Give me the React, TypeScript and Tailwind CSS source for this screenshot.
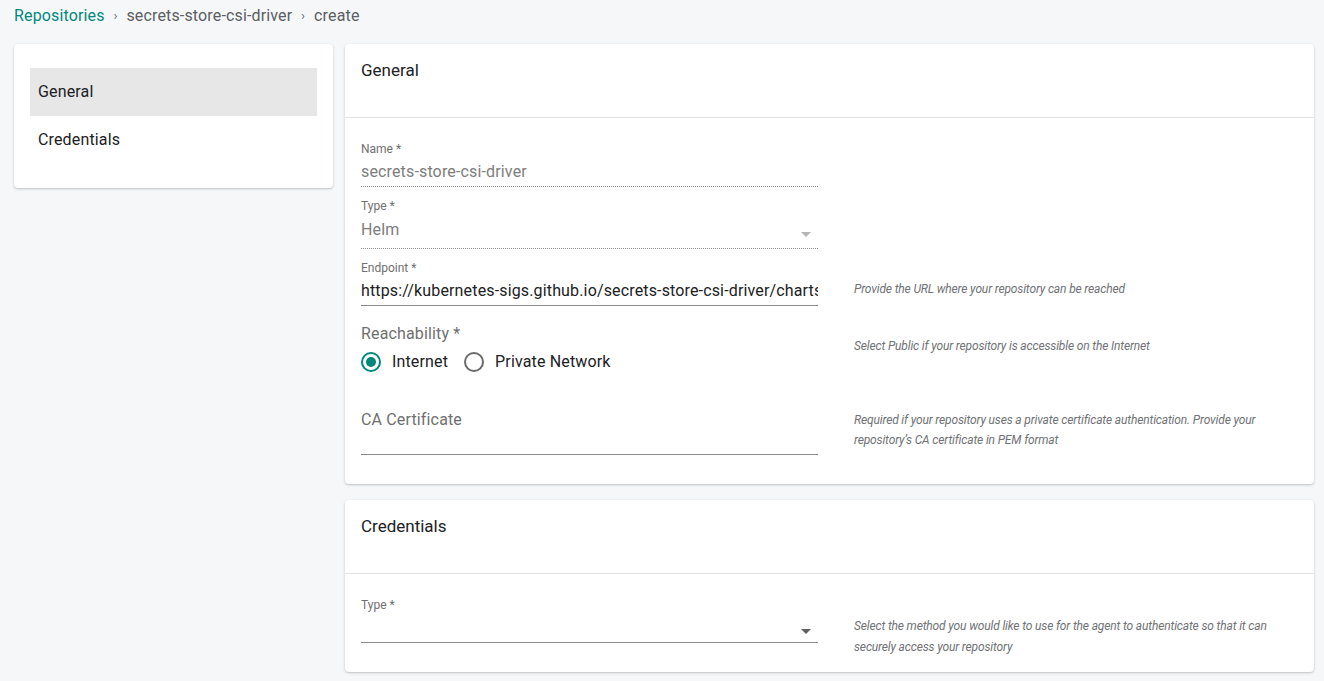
import React from 'react';

const FIELD_W = 'w-[457px]';

function Arrow({ disabled }: { disabled?: boolean }) {
  return (
    <svg viewBox="0 0 24 24" className={`h-6 w-6 ${disabled ? 'fill-[#b5b5b5]' : 'fill-[#5f5f5f]'}`}>
      <path d="M7 10l5 5 5-5z" />
    </svg>
  );
}

function Radio({ checked, label }: { checked?: boolean; label: string }) {
  return (
    <label className="flex items-center gap-[11px]">
      <span
        className={`flex h-5 w-5 items-center justify-center rounded-full border-2 ${
          checked ? 'border-[#00897b]' : 'border-[#6b6b6b]'
        }`}
      >
        {checked && <span className="h-[10px] w-[10px] rounded-full bg-[#00897b]" />}
      </span>
      <span className="text-base tracking-[0.15px] text-[#202124]">{label}</span>
    </label>
  );
}

function Help({ children, className = '' }: { children: React.ReactNode; className?: string }) {
  return (
    <p
      className={`max-w-[430px] text-xs italic leading-[20px] tracking-[-0.15px] text-[#6f7276] ${className}`}
    >
      {children}
    </p>
  );
}

function Row({ children, help }: { children: React.ReactNode; help?: React.ReactNode }) {
  return (
    <div className="flex gap-9">
      <div className={FIELD_W}>{children}</div>
      {help}
    </div>
  );
}

function SmallLabel({ children }: { children: React.ReactNode }) {
  return <div className="h-[14px] text-xs leading-[14px] text-[#6f6f6f]">{children}</div>;
}

const cardShadow = 'shadow-[0_1px_3px_rgba(0,0,0,0.18),0_1px_1px_rgba(0,0,0,0.06)]';

export default function App() {
  return (
    <div
      className="min-h-[681px] bg-[#f6f7f9] pl-[14px] pr-[10px]"
      style={{ fontFamily: 'Roboto, "Noto Sans", sans-serif' }}
    >
      {/* breadcrumb */}
      <nav className="flex h-8 items-center gap-[9px] text-base leading-5 tracking-[0.15px] text-[#5b5e63]">
        <span className="text-[#00897b]">Repositories</span>
        <span className="text-xs">›</span>
        <span>secrets-store-csi-driver</span>
        <span className="text-xs">›</span>
        <span>create</span>
      </nav>

      <div className="mt-3 flex items-start gap-3">
        {/* side nav */}
        <aside className={`w-[319px] rounded bg-white px-4 pb-6 pt-6 ${cardShadow}`}>
          <div className="flex h-12 items-center bg-[#e7e7e7] px-2 text-base tracking-[0.15px] text-[#202124]">
            General
          </div>
          <div className="flex h-12 items-center px-2 text-base tracking-[0.15px] text-[#202124]">
            Credentials
          </div>
        </aside>

        <div className="flex flex-1 flex-col gap-4">
          {/* General card */}
          <section className={`rounded bg-white ${cardShadow}`}>
            <header className="flex h-[74px] items-start border-b border-[#e3e3e3] px-4 pt-[16px] text-[17px] leading-5 text-[#202124]">
              General
            </header>
            <div className="px-4 pb-[29px] pt-[24px]">
              <Row>
                <SmallLabel>Name *</SmallLabel>
                <div className="border-b border-dotted border-[#8c8c8c] pb-[3px] pt-1 text-base leading-[23px] tracking-[0.15px] text-[#7d7d7d]">
                  secrets-store-csi-driver
                </div>
              </Row>

              <div className="mt-[12px]">
                <Row>
                  <SmallLabel>Type *</SmallLabel>
                  <div className="flex items-center justify-between border-b border-dotted border-[#8c8c8c] pb-[7px] pt-[5px] text-base leading-[23px] tracking-[0.15px] text-[#7d7d7d]">
                    <span>Helm</span>
                    <span className="-mb-2">
                      <Arrow disabled />
                    </span>
                  </div>
                </Row>
              </div>

              <div className="mt-[12px]">
                <Row help={<Help className="pt-[18px]">Provide the URL where your repository can be reached</Help>}>
                  <SmallLabel>Endpoint *</SmallLabel>
                  <div className="overflow-hidden whitespace-nowrap border-b border-[#8a8a8a] pb-[3px] pt-1 text-base leading-[23px] tracking-[0.15px] text-[#202124]">
                    https://kubernetes-sigs.github.io/secrets-store-csi-driver/charts
                  </div>
                </Row>
              </div>

              <div className="mt-[18px]">
                <Row help={<Help className="pt-[12px]">Select Public if your repository is accessible on the Internet</Help>}>
                  <div className="text-base leading-[19px] tracking-[0.15px] text-[#6f6f6f]">Reachability *</div>
                  <div className="flex h-[38px] items-center gap-4">
                    <Radio checked label="Internet" />
                    <Radio label="Private Network" />
                  </div>
                </Row>
              </div>

              <div className="pt-[16px]">
                <Row
                  help={
                    <Help className="pt-[13px]">
                      Required if your repository uses a private certificate authentication. Provide your
                      repository’s CA certificate in PEM format
                    </Help>
                  }
                >
                  <div className="border-b border-[#8a8a8a] pb-[25px] pt-[13px] text-base leading-[19px] tracking-[0.15px] text-[#6f6f6f]">
                    CA Certificate
                  </div>
                </Row>
              </div>
            </div>
          </section>

          {/* Credentials card */}
          <section className={`rounded bg-white ${cardShadow}`}>
            <header className="flex h-[74px] items-start border-b border-[#e3e3e3] px-4 pt-[16px] text-[17px] leading-5 text-[#202124]">
              Credentials
            </header>
            <div className="px-4 pb-[14px] pt-[24px]">
              <Row
                help={
                  <Help className="pt-[18px] leading-[21px]">
                    Select the method you would like to use for the agent to authenticate so that it can
                    securely access your repository
                  </Help>
                }
              >
                <SmallLabel>Type *</SmallLabel>
                <div className="flex h-[31px] items-end justify-end border-b border-[#8a8a8a]">
                  <span className="-mb-[1px]">
                    <Arrow />
                  </span>
                </div>
              </Row>
            </div>
          </section>
        </div>
      </div>
    </div>
  );
}
